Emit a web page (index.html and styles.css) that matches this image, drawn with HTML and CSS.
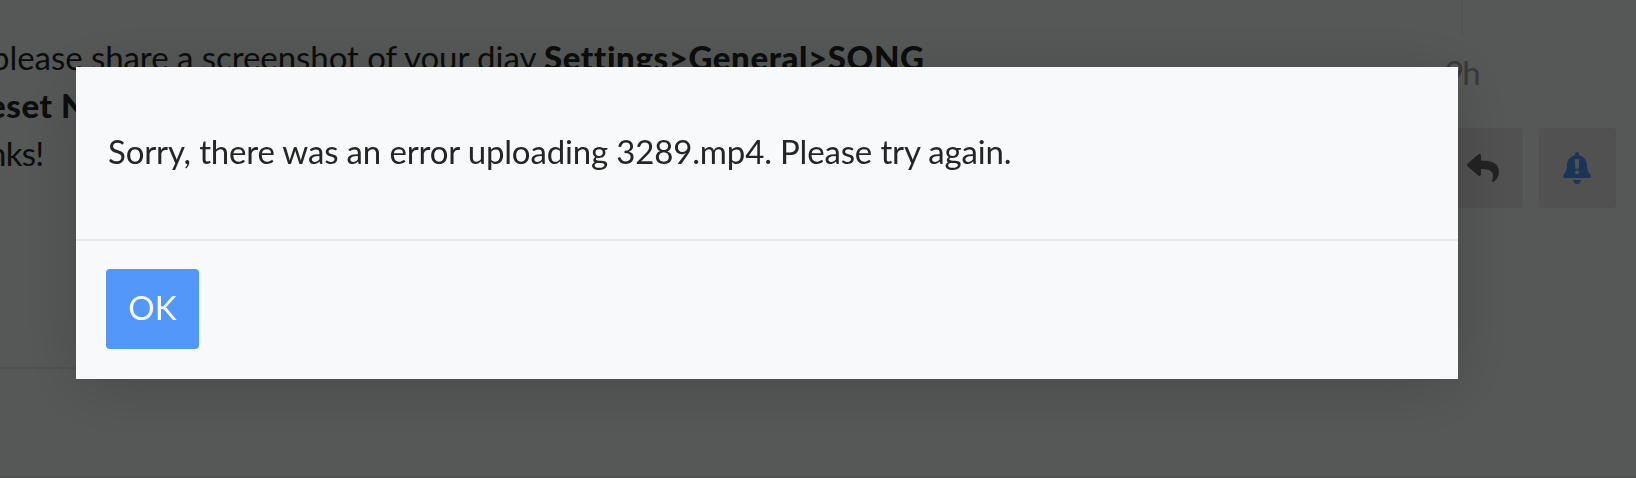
FILE: index.html
```
<!DOCTYPE html>
<html lang="en">
<head>
  <meta charset="UTF-8" />
  <meta name="viewport" content="width=device-width, initial-scale=1" />
  <title>Upload error</title>
  <link rel="stylesheet" href="styles.css">
</head>
<body>
  <main class="topic">
    <article class="post">
      <div class="post-body">
        <p class="line line-first">please share a screenshot of your djay <strong>Settings&gt;General&gt;SONG</strong></p>
        <p class="line line-second"><strong>eset N</strong></p>
        <p class="line line-third">nks!</p>
      </div>
    </article>

    <aside class="topic-side">
      <div class="timeline-bar"></div>
      <span class="timeline-ago">9h</span>
      <div class="side-buttons">
        <button class="side-btn" aria-label="Reply">
          <svg class="icon-reply" viewBox="0 0 512 512"><path d="M8.3 189.8 184.300 37.900C199.700 24.500 224 35.300 224 56V136C384.600 137.900 512 170.100 512 322.300C512 383.700 472.400 444.600 428.700 476.400C415 486.300 395.600 473.900 400.600 457.600C446 312.600 379.100 274.100 224 271.900V360C224 380.700 199.700 391.500 184.300 378.100L8.300 226.100C-2.800 216.600 -2.800 199.400 8.300 189.800Z"/></svg>
        </button>
        <button class="side-btn" aria-label="Notifications">
          <svg class="icon-bell" viewBox="0 0 448 512"><path fill-rule="evenodd" d="M224 512c35.300 0 64-28.600 64-64H160c0 35.400 28.700 64 64 64zM439.400 362.300C420.100 341.500 383.900 310.300 383.900 208C383.900 130.300 329.500 68.100 256 52.800V32a32 32 0 0 0-64 0V52.800C118.500 68.100 64.100 130.300 64.100 208C64.100 310.300 27.900 341.500 8.600 362.300C2.600 368.700 0 376.400 0 384C.1 400.400 13 416 32.100 416H415.900C435 416 447.900 400.400 448 384C448 376.400 445.400 368.700 439.400 362.300zM190 116h68l-6 150h-56zM224 292a32 32 0 1 1 0 64a32 32 0 0 1 0-64z"/></svg>
        </button>
      </div>
    </aside>
  </main>

  <div class="modal-backdrop">
    <div class="modal" role="alertdialog">
      <div class="modal-body"><span class="modal-text">Sorry, there was an error uploading 3289.mp4. Please try again.</span></div>
      <div class="modal-footer">
        <button class="btn-primary">OK</button>
      </div>
    </div>
  </div>
</body>
</html>
```

FILE: styles.css
```
* {
  box-sizing: border-box;
  margin: 0;
  padding: 0;
}

body {
  height: 478px;
  overflow: hidden;
  font-family: Lato, "Liberation Sans", sans-serif;
  font-size: 33px;
  color: #252525;
  background: #f3fbf6;
}

button {
  border: none;
  font-family: inherit;
  cursor: pointer;
}

.topic {
  display: flex;
  justify-content: space-between;
  height: 478px;
  border-bottom: 2px solid #ebe9ea;
}

.post {
  width: 1380px;
  height: 369px;
  padding-top: 33px;
  border-bottom: 2px solid #e6e6e6;
}

.line {
  line-height: 48px;
  letter-spacing: -0.05px;
  white-space: nowrap;
}

.line strong {
  font-weight: 900;
  letter-spacing: 0.6px;
}

.line-first {
  margin-left: -9px;
}

.line-second {
  margin-left: -12px;
}

.line-third {
  margin-left: -12px;
  letter-spacing: -0.7px;
}

.topic-side {
  display: flex;
  flex-direction: column;
  width: 190px;
}

.timeline-bar {
  width: 2px;
  height: 35px;
  margin-left: 15px;
  background: #eaeaf4;
}

.timeline-ago {
  margin-top: 13px;
  margin-left: -1px;
  line-height: 48px;
  letter-spacing: -2px;
  color: #a3a3a3;
}

.side-buttons {
  display: flex;
  gap: 16px;
  margin-top: 32px;
}

.side-btn {
  display: flex;
  align-items: center;
  justify-content: center;
  width: 77px;
  height: 80px;
  padding-right: 2px;
  border-radius: 4px;
  background: #e7e7e7;
}

.icon-reply {
  width: 32px;
  height: 32px;
  margin-right: 2px;
  fill: #646464;
}

.icon-bell {
  width: 28px;
  height: 32px;
  fill: #5297f9;
}

.modal-backdrop {
  position: fixed;
  inset: 0;
  padding: 67px 178px 0 76px;
  background: rgba(0, 0, 0, 0.65);
}

.modal {
  width: 1382px;
  height: 312px;
  background: #f8f9fb;
  box-shadow: 0 8px 60px rgba(0, 0, 0, 0.17);
}

.modal-body {
  height: 172px;
  padding: 60px 32px 0;
  line-height: 48px;
  letter-spacing: -0.16px;
}

.modal-footer {
  height: 140px;
  padding: 28px 30px;
  border-top: 2px solid #e8e9eb;
}

.btn-primary {
  width: 93px;
  height: 80px;
  padding-bottom: 5px;
  border-radius: 4px;
  font-size: 33px;
  color: #f8f9fb;
  background: #5297f9;
}
```
